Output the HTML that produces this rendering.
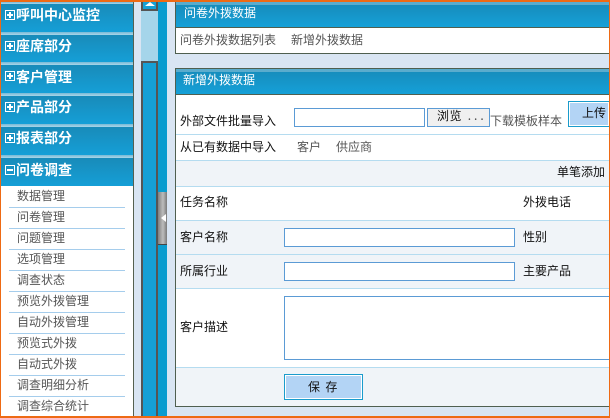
<!DOCTYPE html>
<html lang="zh"><head><meta charset="utf-8"><style>
html,body{margin:0;padding:0}
body{width:610px;height:418px;overflow:hidden;position:relative;background:#d9e5f3;font:12px/14px "WenQuanYi Zen Hei","Noto Sans CJK SC",sans-serif;color:#111}
div,span{position:absolute;white-space:nowrap}
.o{background:#ee6a14}
.h{left:1px;width:132px;background:linear-gradient(#198bb9,#159fd7)}
.b{left:1px;width:132px;background:linear-gradient(#78b9d6,#a8d6ea)}
.ht{left:16px;color:#fff;font-size:14px;line-height:16px;font-weight:bold}
.pm{left:5px;width:8px;height:8px;border:1px solid #fff}
.pm:before{content:"";position:absolute;left:1px;top:3px;width:6px;height:2px;background:#fff}
.pm.p:after{content:"";position:absolute;left:3px;top:1px;width:2px;height:6px;background:#fff}
.s{left:9px;width:116px;height:1px;background:#a5cdec}
.i{left:17px;color:#555}
.hd{background:linear-gradient(#178ab8,#15a0d8)}
.l{left:176px;width:433px;height:1px;background:#b5dcf0}
.g{color:#555}
.in{background:#fff;border:1px solid #5b9bd5;box-sizing:border-box}
.t{color:#111}
</style></head><body>

<div style="left:1px;top:2px;width:132px;height:414px;background:#fff"></div>
<div class="b" style="top:2px;height:2px"></div>
<div class="h" style="top:4px;height:28px"></div>
<div class="b" style="top:32px;height:3px"></div>
<div class="h" style="top:35px;height:27px"></div>
<div class="b" style="top:62px;height:3px"></div>
<div class="h" style="top:65px;height:28px"></div>
<div class="b" style="top:93px;height:3px"></div>
<div class="h" style="top:96px;height:28px"></div>
<div class="b" style="top:124px;height:3px"></div>
<div class="h" style="top:127px;height:28px"></div>
<div class="b" style="top:155px;height:3px"></div>
<div class="h" style="top:158px;height:28px"></div>

<span class="pm p" style="top:10px"></span><span class="ht" style="top:7px">呼叫中心监控</span>
<span class="pm p" style="top:41px"></span><span class="ht" style="top:38px">座席部分</span>
<span class="pm p" style="top:71px"></span><span class="ht" style="top:69px">客户管理</span>
<span class="pm p" style="top:102px"></span><span class="ht" style="top:99px">产品部分</span>
<span class="pm p" style="top:133px"></span><span class="ht" style="top:130px">报表部分</span>
<span class="pm" style="top:165px"></span><span class="ht" style="top:162px">问卷调查</span>

<span class="i" style="top:189px">数据管理</span><div class="s" style="top:207px"></div>
<span class="i" style="top:210px">问卷管理</span><div class="s" style="top:228px"></div>
<span class="i" style="top:231px">问题管理</span><div class="s" style="top:249px"></div>
<span class="i" style="top:252px">选项管理</span><div class="s" style="top:270px"></div>
<span class="i" style="top:273px">调查状态</span><div class="s" style="top:291px"></div>
<span class="i" style="top:294px">预览外拨管理</span><div class="s" style="top:312px"></div>
<span class="i" style="top:315px">自动外拨管理</span><div class="s" style="top:333px"></div>
<span class="i" style="top:336px">预览式外拨</span><div class="s" style="top:354px"></div>
<span class="i" style="top:357px">自动式外拨</span><div class="s" style="top:375px"></div>
<span class="i" style="top:378px">调查明细分析</span><div class="s" style="top:396px"></div>
<span class="i" style="top:399px">调查综合统计</span>

<div style="left:133px;top:2px;width:1px;height:414px;background:#556050"></div>

<div style="left:141px;top:2px;width:17px;height:414px;background:#a5d5ea"></div>
<div style="left:141px;top:2px;width:13px;height:7px;background:#15a0d6;border-left:2px solid #555;border-right:2px solid #555;border-bottom:2px solid #555"></div>
<div style="left:145px;top:2px;width:0;height:0;border-left:5px solid transparent;border-right:5px solid transparent;border-bottom:4px solid #fff"></div>
<div style="left:141px;top:61px;width:13px;height:355px;background:#15a0d6;border:2px solid #555;border-bottom:0"></div>

<div style="left:158px;top:2px;width:9px;height:414px;background:#0a9ccf"></div>
<div style="left:158px;top:192px;width:9px;height:53px;background:linear-gradient(90deg,#7f7f7f,#bdbdbd 55%,#7a7a7a);border-bottom:1px solid #444;box-sizing:border-box"></div>
<div style="left:161px;top:214px;width:0;height:0;border-top:4px solid transparent;border-bottom:4px solid transparent;border-right:5px solid #fff"></div>

<!-- panel 1 -->
<div style="left:175px;top:2px;width:435px;height:52px;background:#fff"></div>
<div class="hd" style="left:175px;top:2px;width:435px;height:25px"></div>
<div style="left:175px;top:2px;width:435px;height:3px;background:#5aaccd"></div>
<div style="left:175px;top:27px;width:435px;height:1px;background:#4f5f50"></div>
<div style="left:175px;top:53px;width:435px;height:1px;background:#4f5f50"></div>
<div style="left:175px;top:2px;width:1px;height:52px;background:#4f5f50"></div>
<span style="left:184px;top:6px;color:#fff">问卷外拨数据</span>
<span class="g" style="left:180px;top:33px">问卷外拨数据列表</span>
<span class="g" style="left:291px;top:33px">新增外拨数据</span>

<!-- panel 2 -->
<div style="left:175px;top:68px;width:435px;height:339px;background:#fff"></div>
<div class="hd" style="left:175px;top:68px;width:435px;height:26px"></div>
<div style="left:175px;top:68px;width:435px;height:1px;background:#4f5f50"></div>
<div style="left:175px;top:69px;width:435px;height:3px;background:#5aaccd"></div>
<div style="left:175px;top:94px;width:435px;height:1px;background:#4f5f50"></div>
<span style="left:183px;top:73px;color:#fff">新增外拨数据</span>

<div style="left:176px;top:161px;width:433px;height:25px;background:#f0f4f8"></div>
<div style="left:176px;top:221px;width:433px;height:67px;background:#f0f4f8"></div>
<div style="left:176px;top:368px;width:433px;height:38px;background:#f0f4f8"></div>
<div class="l" style="top:134px"></div>
<div class="l" style="top:160px"></div>
<div class="l" style="top:186px"></div>
<div class="l" style="top:220px"></div>
<div class="l" style="top:254px"></div>
<div class="l" style="top:288px"></div>
<div class="l" style="top:367px"></div>
<div style="left:175px;top:68px;width:1px;height:339px;background:#4f5f50"></div>
<div style="left:175px;top:406px;width:435px;height:1px;background:#4f5f50"></div>

<span class="t" style="left:180px;top:114px">外部文件批量导入</span>
<div class="in" style="left:294px;top:108px;width:131px;height:19px"></div>
<div class="in" style="left:427px;top:108px;width:63px;height:19px;background:#f0f0f0"></div>
<span class="t" style="left:437px;top:109px;letter-spacing:.5px">浏览<span style="position:static;letter-spacing:3px;color:#444"> ...</span></span>
<span class="g" style="left:490px;top:114px">下载模板样本</span>
<div style="left:568px;top:101px;width:42px;height:26px;box-sizing:border-box;border:1px solid #1a9ccc;background:#b3d4f5;box-shadow:inset 0 0 0 1px #fff;padding-left:13px;line-height:22px">上传</div>

<span class="t" style="left:180px;top:140px">从已有数据中导入</span>
<span class="g" style="left:297px;top:140px">客户</span>
<span class="g" style="left:336px;top:140px">供应商</span>

<span class="t" style="left:557px;top:165px">单笔添加</span>

<span class="t" style="left:180px;top:195px">任务名称</span>
<span class="t" style="left:523px;top:195px">外拨电话</span>

<span class="t" style="left:180px;top:230px">客户名称</span>
<div class="in" style="left:284px;top:228px;width:231px;height:19px"></div>
<span class="t" style="left:523px;top:230px">性别</span>

<span class="t" style="left:180px;top:264px">所属行业</span>
<div class="in" style="left:284px;top:262px;width:231px;height:19px"></div>
<span class="t" style="left:523px;top:264px">主要产品</span>

<span class="t" style="left:180px;top:320px">客户描述</span>
<div class="in" style="left:284px;top:296px;width:326px;height:64px"></div>

<div style="left:284px;top:374px;width:79px;height:26px;box-sizing:border-box;border:1px solid #1a9ccc;background:#b3d4f5;box-shadow:inset 0 0 0 1px #fff;padding-left:23px;line-height:23px">保&nbsp;&nbsp;存</div>

<!-- orange frame -->
<div class="o" style="left:0;top:0;width:610px;height:2px"></div>
<div class="o" style="left:0;top:416px;width:610px;height:2px"></div>
<div class="o" style="left:0;top:0;width:1px;height:418px"></div>
<div class="o" style="left:609px;top:0;width:1px;height:418px"></div>
</body></html>
